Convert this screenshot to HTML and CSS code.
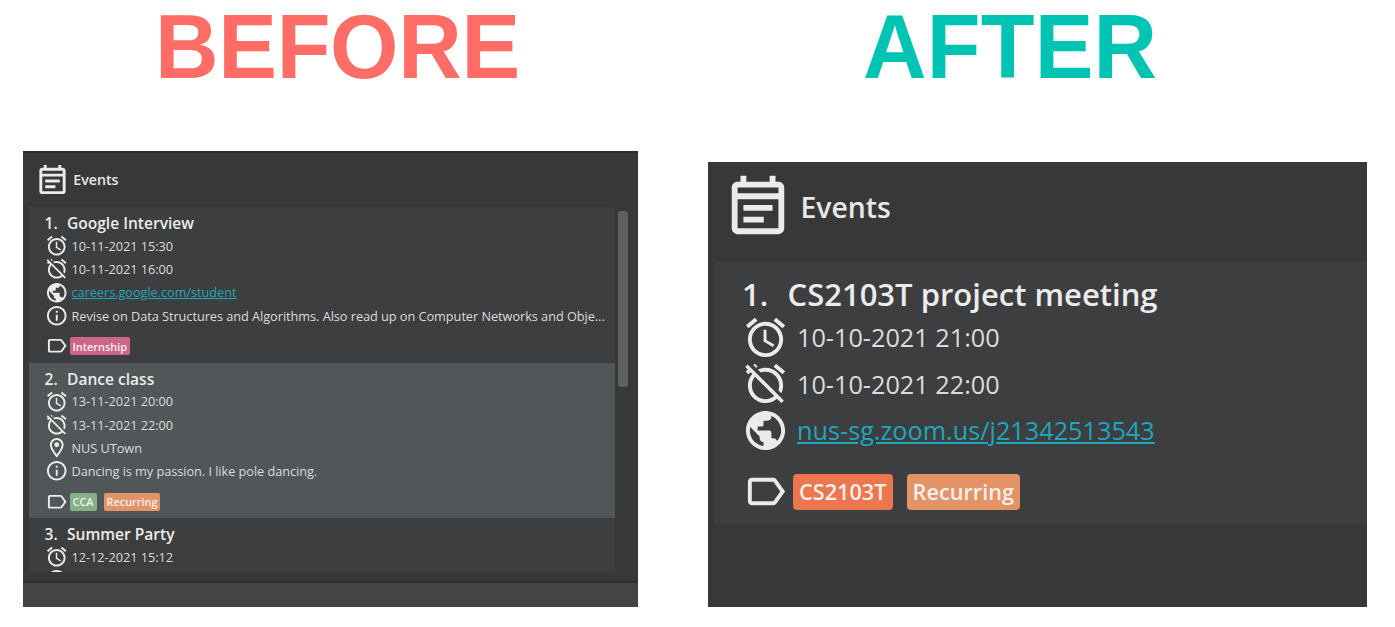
FILE: index.html
```html
<!DOCTYPE html>
<html lang="en">
<head>
<meta charset="utf-8">
<title>Before and after</title>
<link rel="stylesheet" href="styles.css">
</head>
<body>
<svg class="sprite" aria-hidden="true">
  <symbol id="note" viewBox="0 0 24 24"><path d="M19 4h-1V2h-2v2H8V2H6v2H5c-1.100 0-2 .9-2 2v14c0 1.100.9 2 2 2h14c1.100 0 2-.9 2-2V6c0-1.100-.9-2-2-2zm0 16H5V10h14v10zm0-12H5V6h14v2zM7 12h10v2H7zM7 16h7v2H7z"/></symbol>
  <symbol id="alarm" viewBox="0 0 24 24"><path d="M22 5.720l-4.600-3.860-1.290 1.530 4.600 3.860L22 5.720zM7.880 3.390L6.600 1.860 2 5.710l1.290 1.530 4.590-3.850zM12.500 8H11v6l4.750 2.850.75-1.230-4-2.370V8zM12 4c-4.970 0-9 4.030-9 9s4.020 9 9 9c4.970 0 9-4.030 9-9s-4.030-9-9-9zm0 16c-3.870 0-7-3.130-7-7s3.130-7 7-7 7 3.130 7 7-3.130 7-7 7z"/></symbol>
  <symbol id="alarm-off" viewBox="0 0 24 24"><path d="M12 6c3.870 0 7 3.130 7 7 0 .84-.16 1.650-.43 2.400l1.520 1.520c.58-1.190.91-2.510.91-3.920 0-4.970-4.030-9-9-9-1.410 0-2.730.33-3.920.91L9.600 6.430C10.350 6.160 11.160 6 12 6zm10-.28l-4.600-3.860-1.290 1.530 4.600 3.860L22 5.720zM2.920 2.290L1.650 3.570 2.980 4.900l-1.110.93 1.420 1.420 1.110-.94.8.8C3.830 8.690 3 10.750 3 13c0 4.970 4.020 9 9 9 2.250 0 4.310-.83 5.890-2.200l2.200 2.200 1.270-1.270L3.890 3.270l-.97-.98zm13.550 16.100C15.260 19.390 13.700 20 12 20c-3.870 0-7-3.130-7-7 0-1.700.61-3.260 1.610-4.470l9.860 9.860zM8.020 3.280L6.600 1.860l-.86.71 1.420 1.420.86-.71z"/></symbol>
  <symbol id="globe" viewBox="0 0 24 24"><path d="M12 2C6.480 2 2 6.480 2 12s4.480 10 10 10 10-4.480 10-10S17.520 2 12 2zm-1 17.930c-3.950-.49-7-3.850-7-7.930 0-.62.08-1.210.21-1.790L9 15v1c0 1.100.9 2 2 2v1.930zm6.900-2.540c-.26-.81-1-1.390-1.900-1.390h-1v-3c0-.55-.45-1-1-1H8v-2h2c.55 0 1-.45 1-1V7h2c1.100 0 2-.9 2-2v-.41c2.930 1.190 5 4.060 5 7.410 0 2.080-.8 3.970-2.100 5.390z"/></symbol>
  <symbol id="info" viewBox="0 0 24 24"><path d="M11 7h2v2h-2zm0 4h2v6h-2zm1-9C6.480 2 2 6.480 2 12s4.480 10 10 10 10-4.480 10-10S17.520 2 12 2zm0 18c-4.410 0-8-3.590-8-8s3.590-8 8-8 8 3.590 8 8-3.590 8-8 8z"/></symbol>
  <symbol id="place" viewBox="0 0 24 24"><path d="M12 2C8.130 2 5 5.130 5 9c0 5.250 7 13 7 13s7-7.750 7-13c0-3.870-3.130-7-7-7zM7 9c0-2.760 2.240-5 5-5s5 2.240 5 5c0 2.880-2.880 7.190-5 9.880C9.920 16.210 7 11.850 7 9z"/><circle cx="12" cy="9" r="2.500"/></symbol>
  <symbol id="label" viewBox="0 0 24 24"><path d="M17.630 5.840C17.270 5.330 16.670 5 16 5L5 5.010C3.900 5.010 3 5.900 3 7v10c0 1.100.9 1.990 2 1.990L16 19c.67 0 1.270-.33 1.630-.84L22 12l-4.370-6.160zM16 17H5V7h11l3.550 5L16 17z"/></symbol>
</svg>
<main class="comparison">
  <section class="side side-before">
    <h1 class="heading heading-before">BEFORE</h1>
    <div class="panel panel-small">
      <header class="panel-header"><svg class="header-icon"><use href="#note"/></svg><span class="panel-title">Events</span></header>
      <div class="panel-body">
        <div class="list">
          <article class="event">
            <h2 class="event-title"><span class="number">1.</span>Google Interview</h2>
            <div class="row"><svg class="icon"><use href="#alarm"/></svg><span>10-11-2021 15:30</span></div>
            <div class="row"><svg class="icon"><use href="#alarm-off"/></svg><span>10-11-2021 16:00</span></div>
            <div class="row"><svg class="icon"><use href="#globe"/></svg><span class="link">careers.google.com/student</span></div>
            <div class="row"><svg class="icon"><use href="#info"/></svg><span>Revise on Data Structures and Algorithms. Also read up on Computer Networks and Obje...</span></div>
            <div class="tags"><svg class="icon"><use href="#label"/></svg><span class="tag tag-pink">Internship</span></div>
          </article>
          <article class="event event-selected">
            <h2 class="event-title"><span class="number">2.</span>Dance class</h2>
            <div class="row"><svg class="icon"><use href="#alarm"/></svg><span>13-11-2021 20:00</span></div>
            <div class="row"><svg class="icon"><use href="#alarm-off"/></svg><span>13-11-2021 22:00</span></div>
            <div class="row"><svg class="icon"><use href="#place"/></svg><span>NUS UTown</span></div>
            <div class="row"><svg class="icon"><use href="#info"/></svg><span>Dancing is my passion. I like pole dancing.</span></div>
            <div class="tags"><svg class="icon"><use href="#label"/></svg><span class="tag tag-green">CCA</span><span class="tag tag-orange">Recurring</span></div>
          </article>
          <article class="event">
            <h2 class="event-title"><span class="number">3.</span>Summer Party</h2>
            <div class="row"><svg class="icon"><use href="#alarm"/></svg><span>12-12-2021 15:12</span></div>
            <div class="row"><svg class="icon"><use href="#info"/></svg></div>
          </article>
        </div>
        <div class="scrollbar"></div>
      </div>
      <footer class="status"></footer>
    </div>
  </section>
  <section class="side side-after">
    <h1 class="heading heading-after">AFTER</h1>
    <div class="panel panel-large">
      <header class="panel-header"><svg class="header-icon"><use href="#note"/></svg><span class="panel-title">Events</span></header>
      <div class="panel-body">
        <div class="list">
          <article class="event">
            <h2 class="event-title"><span class="number">1.</span>CS2103T project meeting</h2>
            <div class="row"><svg class="icon"><use href="#alarm"/></svg><span>10-10-2021 21:00</span></div>
            <div class="row"><svg class="icon"><use href="#alarm-off"/></svg><span>10-10-2021 22:00</span></div>
            <div class="row"><svg class="icon"><use href="#globe"/></svg><span class="link">nus-sg.zoom.us/j21342513543</span></div>
            <div class="tags"><svg class="icon"><use href="#label"/></svg><span class="tag tag-red">CS2103T</span><span class="tag tag-orange">Recurring</span></div>
          </article>
        </div>
      </div>
    </div>
  </section>
</main>
</body>
</html>
```

FILE: styles.css
```css
* { box-sizing: border-box; }

body {
  margin: 0;
  background: #fff;
  font-family: "Open Sans", "Noto Sans", sans-serif;
}

.sprite { display: none; }

.comparison {
  display: flex;
  width: 1395px;
  height: 627px;
  padding-left: 23px;
}

.side { display: flex; flex-direction: column; }
.side-before { width: 615px; margin-right: 70px; }
.side-after { width: 659px; }

.heading {
  margin: 0;
  height: 151px;
  line-height: 96px;
  font-family: "Liberation Sans", Arial, sans-serif;
  font-size: 88px;
  font-weight: 700;
  white-space: nowrap;
  transform: scaleY(1.041);
  transform-origin: 0 78px;
}
.heading-before { color: #ff6d66; padding-left: 132px; letter-spacing: -0.300px; }
.heading-after { color: #00c4b3; height: 162px; padding-left: 155px; letter-spacing: 0.200px; }

.panel {
  display: flex;
  flex-direction: column;
  background: #383838;
  color: #dcdcdc;
  white-space: nowrap;
}

.panel-header { display: flex; align-items: center; flex: none; }
.header-icon, .icon { display: block; flex: none; fill: #ebebeb; }
.panel-title { color: #e8e8e8; font-weight: 600; }
.panel-body { display: flex; }
.list { overflow: hidden; background: #3c3e3f; }
.event-selected { background: #515658; }
.event-title { display: flex; align-items: center; margin: 0; font-weight: 600; color: #ececec; }
.row, .tags { display: flex; align-items: center; }
.link {
  color: #1fa6bd;
  text-decoration: underline;
}
.tag { display: flex; align-items: center; justify-content: center; font-weight: 600; color: #f3efee; }
.tag-pink { background: #cc6688; }
.tag-green { background: #86b086; }
.tag-orange { background: #e29466; }
.tag-red { background: #ec774e; }

.panel-small { height: 456px; border-top: 2px solid #2b2d2d; }
.panel-small .panel-header { height: 54px; padding: 0 0 2px 11.500px; }
.panel-small .header-icon { width: 35px; height: 35px; }
.panel-small .panel-title { margin-left: 3.800px; font-size: 14.200px; padding-top: 1px; }
.panel-small .panel-body { height: 365px; padding-left: 6px; }
.panel-small .list { width: 586px; }
.panel-small .event { height: 155.500px; padding-left: 15.500px; }
.panel-small .event-title { height: 27.400px; font-size: 15.550px; padding-top: 5px; }
.panel-small .number { width: 22.500px; }
.panel-small .row { height: 23.200px; font-size: 12.750px; letter-spacing: -0.050px; }
.panel-small .icon { width: 23.500px; height: 23.500px; margin-right: 3.500px; }
.panel-small .tags { height: 38px; font-size: 10.900px; }
.panel-small .tags .icon { margin-right: 1.500px; }
.panel-small .tag { height: 18px; padding: 0 3px; margin-right: 7px; border-radius: 2px; }

.scrollbar {
  width: 10px;
  height: 176px;
  margin: 4px 0 0 3px;
  border-radius: 3px;
  background: #606060;
}

.status {
  height: 26px;
  margin-top: auto;
  border-top: 2px solid #303030;
  background: #444;
}

.panel-large { height: 445px; }
.panel-large .panel-header { height: 100px; padding: 0 0 15px 15px; }
.panel-large .header-icon { width: 70px; height: 70px; }
.panel-large .panel-title { margin-left: 7.500px; font-size: 28.350px; padding-top: 4px; }
.panel-large .panel-body { padding-left: 6px; }
.panel-large .list { width: 653px; }
.panel-large .event { height: 262px; padding-left: 28px; }
.panel-large .event-title { height: 51.800px; font-size: 31px; padding-top: 12px; }
.panel-large .number { width: 45.500px; }
.panel-large .row { height: 46.500px; font-size: 25.250px; }
.panel-large .icon { width: 47px; height: 47px; margin-right: 8px; }
.panel-large .tags { height: 77px; font-size: 21.700px; }
.panel-large .tags .icon { margin-right: 4px; }
.panel-large .tag { height: 36px; padding: 0 6px; margin-right: 14px; border-radius: 4px; }
```
